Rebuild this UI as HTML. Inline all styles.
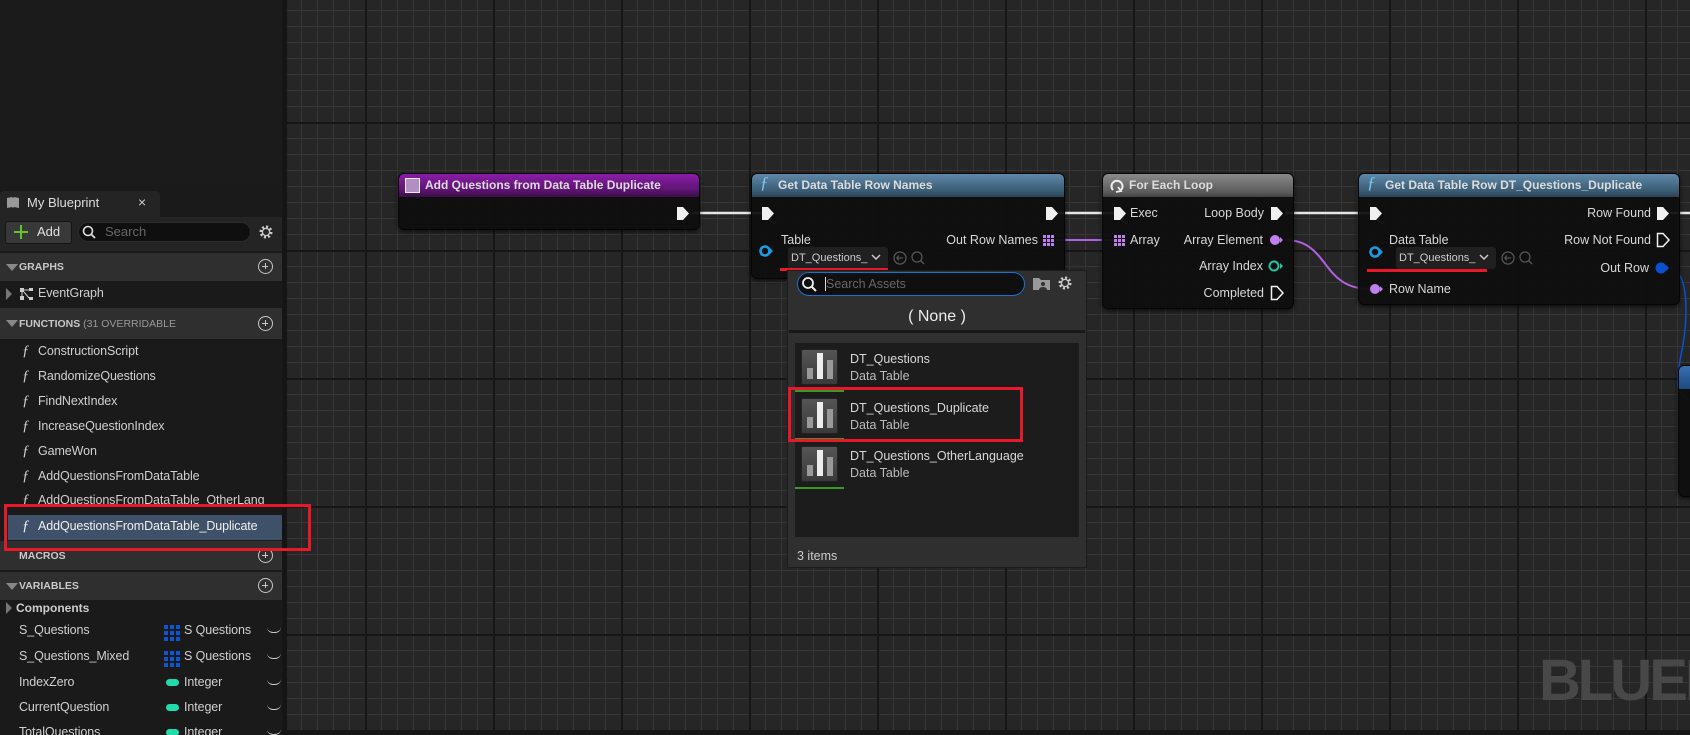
<!DOCTYPE html>
<html><head><meta charset="utf-8"><style>
*{margin:0;padding:0;box-sizing:border-box}
html,body{width:1690px;height:735px;overflow:hidden}
body{background:#262626;font-family:"Liberation Sans",sans-serif;color:#d8d8d8;position:relative;font-size:12.5px}
#root{position:absolute;left:0;top:0;width:1690px;height:735px;overflow:hidden}
.a{position:absolute}
.t{position:absolute;white-space:nowrap;line-height:16px;height:16px}
.r{position:absolute;white-space:nowrap;line-height:16px;height:16px;text-align:right;width:200px}
#canvas{position:absolute;left:287px;top:0;width:1403px;height:730px;background-color:#262626;
background-image:
linear-gradient(to right,#161616 0,#161616 2px,transparent 2px),
linear-gradient(to bottom,#161616 0,#161616 2px,transparent 2px),
linear-gradient(to right,#353535 0,#353535 1px,transparent 1px),
linear-gradient(to bottom,#353535 0,#353535 1px,transparent 1px);
background-size:128px 128px,128px 128px,16px 16px,16px 16px;
background-position:78px 0,0 122px,14px 0,0 10px}
.node{position:absolute;background:rgba(14,14,14,0.94);border:1px solid #050505;border-radius:6px;box-shadow:0 2px 4px rgba(0,0,0,.6)}
.hdr{position:absolute;left:0;right:0;top:0;height:23px;border-radius:5px 5px 0 0;font-weight:bold;color:#dcdcdc;font-size:12px;line-height:23px;padding-left:26px;white-space:nowrap}
.sec{position:absolute;left:0;width:282px;background:#2f2f2f;height:28px}
.sec b{position:absolute;left:19px;top:8px;font-size:10.5px;color:#c8c8c8}
.plus{position:absolute;left:258px;top:6px;width:15px;height:15px;border:1.5px solid #c8c8c8;border-radius:50%;}
.plus:before{content:"";position:absolute;left:3px;top:5.5px;width:6px;height:1.5px;background:#c8c8c8}
.plus:after{content:"";position:absolute;left:5.5px;top:3px;width:1.5px;height:6px;background:#c8c8c8}
.tri{position:absolute;width:0;height:0;border-left:6px solid transparent;border-right:6px solid transparent;border-top:7px solid #888}
.fn{position:absolute;left:22px;font-style:italic;font-family:"Liberation Serif",serif;font-size:15px;color:#ccc}
.it{position:absolute;left:38px;font-size:12.5px;color:#d0d0d0;white-space:nowrap;letter-spacing:-0.1px}
.eye{position:absolute;left:267px;width:14px;height:6px;border-bottom:1.5px solid #ccc;border-radius:0 0 8px 8px}
.dticon{position:absolute;width:37px;height:36px;background:linear-gradient(#555,#3a3a3a);border:1px solid #222;border-radius:2px}
.dticon i{position:absolute;bottom:5px;width:6px;background:#999}
</style></head><body><div id="root">

<div id="canvas"></div>

<!-- left panel -->
<div class="a" style="left:0;top:0;width:282px;height:185px;background:#1b1b1b"></div>
<div class="a" style="left:282px;top:0;width:5px;height:735px;background:#151515"></div>
<div class="a" style="left:0;top:185px;width:282px;height:550px;background:#1a1a1a"></div>
<div class="a" style="left:0;top:191px;width:160px;height:27px;background:#242424;border-radius:4px 4px 0 0"></div>
<svg class="a" style="left:6px;top:196px" width="14" height="13"><path d="M1 2 L6 1 L7 2 L8 1 L13 2 L13 12 L8 11 L7 12 L6 11 L1 12Z" fill="#999"/></svg>
<div class="t" style="left:27px;top:195px;color:#ddd;font-size:13px">My Blueprint</div>
<div class="t" style="left:138px;top:194px;color:#ccc;font-size:14px">×</div>
<div class="a" style="left:0;top:217px;width:282px;height:34px;background:#242424"></div>
<div class="a" style="left:5px;top:221px;width:67px;height:23px;background:#383838;border:1px solid #141414;border-radius:3px"></div>
<div class="a" style="left:20px;top:225px;width:2px;height:14px;background:#6bc02e"></div>
<div class="a" style="left:14px;top:231px;width:14px;height:2px;background:#6bc02e"></div>
<div class="t" style="left:37px;top:224px;color:#e0e0e0;font-size:13px">Add</div>
<div class="a" style="left:78px;top:222px;width:173px;height:20px;background:#0f0f0f;border:1px solid #2c2c2c;border-radius:10px"></div>
<svg class="a" style="left:82px;top:225px" width="15" height="15"><circle cx="6" cy="6" r="4.5" stroke="#ddd" stroke-width="1.6" fill="none"/><path d="M9.5 9.5 L13 13" stroke="#ddd" stroke-width="1.8"/></svg>
<div class="t" style="left:105px;top:224px;color:#666;font-size:13px">Search</div>
<svg class="a" style="left:258px;top:224px" width="16" height="16"><circle cx="8" cy="8" r="5" stroke="#ccc" stroke-width="3" fill="none" stroke-dasharray="2 1.9"/><circle cx="8" cy="8" r="3.6" stroke="#ccc" stroke-width="1.3" fill="none"/></svg>

<div class="sec" style="top:253px"><div class="tri" style="left:6px;top:11px"></div><b>GRAPHS</b><div class="plus"></div></div>
<div class="a" style="left:6px;top:288px;width:0;height:0;border-top:6px solid transparent;border-bottom:6px solid transparent;border-left:6px solid #777"></div>
<svg class="a" style="left:19px;top:287px" width="15" height="14"><rect x="1" y="1" width="4" height="4" fill="#ccc"/><rect x="10" y="1" width="4" height="3" fill="#ccc"/><rect x="1" y="9" width="4" height="4" fill="#ccc"/><rect x="10" y="10" width="4" height="3" fill="#ccc"/><path d="M5 3H10M3 5V9M5 5L10 11" stroke="#ccc"/></svg>
<div class="it" style="top:286px">EventGraph</div>
<div class="sec" style="top:308px;height:31px"><div class="tri" style="left:6px;top:12px"></div><b style="top:10px">FUNCTIONS <span style="font-weight:normal;color:#999">(31 OVERRIDABLE</span></b><div class="plus" style="top:8px"></div></div>
<div class="fn" style="top:343px">ƒ</div><div class="it" style="top:344px">ConstructionScript</div>
<div class="fn" style="top:368px">ƒ</div><div class="it" style="top:369px">RandomizeQuestions</div>
<div class="fn" style="top:393px">ƒ</div><div class="it" style="top:394px">FindNextIndex</div>
<div class="fn" style="top:418px">ƒ</div><div class="it" style="top:419px">IncreaseQuestionIndex</div>
<div class="fn" style="top:443px">ƒ</div><div class="it" style="top:444px">GameWon</div>
<div class="fn" style="top:468px">ƒ</div><div class="it" style="top:469px">AddQuestionsFromDataTable</div>
<div class="fn" style="top:492px">ƒ</div><div class="it" style="top:493px">AddQuestionsFromDataTable_OtherLang</div>
<div class="a" style="left:8px;top:515px;width:274px;height:25px;background:#3e5169"></div>
<div class="fn" style="top:518px;color:#eee">ƒ</div><div class="it" style="top:519px;color:#f0f0f0">AddQuestionsFromDataTable_Duplicate</div>
<div class="sec" style="top:541px;height:29px"><b style="top:9px">MACROS</b><div class="plus" style="top:7px"></div></div>
<div class="sec" style="top:572px;height:28px"><div class="tri" style="left:6px;top:11px"></div><b>VARIABLES</b><div class="plus"></div></div>
<div class="a" style="left:6px;top:602px;width:0;height:0;border-top:6px solid transparent;border-bottom:6px solid transparent;border-left:6px solid #777"></div>
<div class="t" style="left:16px;top:600px;font-weight:bold;font-size:12px;color:#ccc">Components</div>
<div class="it" style="left:19px;top:623px">S_Questions</div>
<div class="it" style="left:19px;top:649px">S_Questions_Mixed</div>
<div class="it" style="left:19px;top:675px">IndexZero</div>
<div class="it" style="left:19px;top:700px">CurrentQuestion</div>
<div class="it" style="left:19px;top:725px">TotalQuestions</div>
<svg class="a" style="left:164px;top:625px" width="16" height="16"><g fill="#0a56d6"><rect x="0" y="0" width="4" height="4"/><rect x="6" y="0" width="4" height="4"/><rect x="12" y="0" width="4" height="4"/><rect x="0" y="6" width="4" height="4"/><rect x="6" y="6" width="4" height="4"/><rect x="12" y="6" width="4" height="4"/><rect x="0" y="12" width="4" height="4"/><rect x="6" y="12" width="4" height="4"/><rect x="12" y="12" width="4" height="4"/></g></svg>
<svg class="a" style="left:164px;top:651px" width="16" height="16"><g fill="#0a56d6"><rect x="0" y="0" width="4" height="4"/><rect x="6" y="0" width="4" height="4"/><rect x="12" y="0" width="4" height="4"/><rect x="0" y="6" width="4" height="4"/><rect x="6" y="6" width="4" height="4"/><rect x="12" y="6" width="4" height="4"/><rect x="0" y="12" width="4" height="4"/><rect x="6" y="12" width="4" height="4"/><rect x="12" y="12" width="4" height="4"/></g></svg>
<div class="it" style="left:184px;top:623px">S Questions</div>
<div class="it" style="left:184px;top:649px">S Questions</div>
<div class="a" style="left:166px;top:679px;width:13px;height:7px;border-radius:4px;background:#1fdcaa"></div>
<div class="a" style="left:166px;top:704px;width:13px;height:7px;border-radius:4px;background:#1fdcaa"></div>
<div class="a" style="left:166px;top:729px;width:13px;height:7px;border-radius:4px;background:#1fdcaa"></div>
<div class="it" style="left:184px;top:675px">Integer</div>
<div class="it" style="left:184px;top:700px">Integer</div>
<div class="it" style="left:184px;top:725px">Integer</div>
<div class="eye" style="top:627px"></div><div class="eye" style="top:653px"></div><div class="eye" style="top:679px"></div><div class="eye" style="top:704px"></div><div class="eye" style="top:729px"></div>
<div class="a" style="left:4px;top:504px;width:307px;height:47px;border:3px solid #e8182a"></div>

<!-- wires -->
<svg class="a" style="left:0;top:0" width="1690" height="735">
<g stroke="#e6e6e6" stroke-width="2.5" fill="none">
<path d="M692 213H762"/><path d="M1058 213H1117"/><path d="M1285 213H1370"/><path d="M1670 213H1690"/>
</g>
<g stroke="#b060e0" stroke-width="2" fill="none">
<path d="M1056 240H1112"/>
<path d="M1285 240 C1330 240,1320 289,1370 289"/>
</g>
<path d="M1668 268 C1690 268,1688 320,1682 350 C1676 380,1675 395,1690 400" stroke="#0a50d0" stroke-width="1.5" fill="none"/>
</svg>

<!-- node 1 -->
<div class="node" style="left:398px;top:173px;width:302px;height:57px">
 <div class="hdr" style="background:linear-gradient(to bottom,#8a1da8,#5c1470 70%,#3a1046)">Add Questions from Data Table Duplicate</div>
 <div class="a" style="left:6px;top:4px;width:15px;height:15px;background:#b090c0;border:1.5px solid #eee"></div>
</div>

<!-- node 2 -->
<div class="node" style="left:751px;top:173px;width:314px;height:106px">
 <div class="hdr" style="background:linear-gradient(to bottom,#5f88a8,#36576f 80%,#2a4154)">Get Data Table Row Names</div>
 <div class="a" style="left:8px;top:-1px;font-family:'Liberation Serif',serif;font-style:italic;font-size:17px;color:#7ec8f0">ƒ</div>
</div>

<!-- node 3 -->
<div class="node" style="left:1102px;top:173px;width:192px;height:136px">
 <div class="hdr" style="background:linear-gradient(to bottom,#8a8a8a,#5a5a5a 80%,#444)">For Each Loop</div>
 <svg class="a" style="left:6px;top:4px" width="16" height="15"><path d="M4 12 A5.5 5.5 0 1 1 12 12" stroke="#eee" stroke-width="2" fill="none"/><path d="M9 9 L12 13 L7 14" stroke="#eee" stroke-width="1.8" fill="none"/></svg>
</div>

<!-- node 4 -->
<div class="node" style="left:1358px;top:173px;width:322px;height:132px">
 <div class="hdr" style="background:linear-gradient(to bottom,#5f88a8,#36576f 80%,#2a4154)">Get Data Table Row DT_Questions_Duplicate</div>
 <div class="a" style="left:8px;top:-1px;font-family:'Liberation Serif',serif;font-style:italic;font-size:17px;color:#7ec8f0">ƒ</div>
</div>

<!-- partial node right -->
<div class="node" style="left:1678px;top:365px;width:40px;height:132px">
 <div class="hdr" style="background:linear-gradient(#3a6fb0,#1d4a80)"></div>
</div>

<!-- pins -->
<svg class="a" style="left:0;top:0" width="1690" height="735">
<defs><path id="ex" d="M0 0H6L12 6.5L6 13H0Z"/></defs>
<g fill="#f0f0f0">
<use href="#ex" x="677" y="207"/><use href="#ex" x="762" y="207"/><use href="#ex" x="1046" y="207"/>
<use href="#ex" x="1114" y="207"/><use href="#ex" x="1271" y="207"/>
<use href="#ex" x="1370" y="207"/><use href="#ex" x="1657" y="207"/>
</g>
<g fill="none" stroke="#f0f0f0" stroke-width="1.5">
<path d="M1271.5 286.5H1277L1283 293L1277 299.5H1271.5Z"/>
<path d="M1657.5 233.5H1663L1669 240L1663 246.5H1657.5Z"/>
</g>
<g fill="none" stroke="#1a9de6" stroke-width="2.5"><circle cx="765" cy="251" r="4.5"/><circle cx="1375" cy="252" r="4.5"/></g>
<path d="M770 248L773 251L770 254Z" fill="#1a9de6"/><path d="M1380 249L1383 252L1380 255Z" fill="#1a9de6"/>
<circle cx="1275" cy="240" r="5" fill="#c080f0"/><path d="M1280 237L1283 240L1280 243Z" fill="#c080f0"/>
<circle cx="1375" cy="289" r="5" fill="#c080f0"/><path d="M1380 286L1383 289L1380 292Z" fill="#c080f0"/>
<circle cx="1274" cy="266" r="4.5" fill="none" stroke="#1fc8a0" stroke-width="2"/><path d="M1280 263L1283 266L1280 269Z" fill="#1fc8a0"/>
<circle cx="1661" cy="268" r="5.5" fill="#0a50d0"/><path d="M1666 265L1669 268L1666 271Z" fill="#0a50d0"/>
<g fill="#c080f0">
<rect x="1043" y="235" width="3" height="3"/><rect x="1047" y="235" width="3" height="3"/><rect x="1051" y="235" width="3" height="3"/>
<rect x="1043" y="239" width="3" height="3"/><rect x="1047" y="239" width="3" height="3"/><rect x="1051" y="239" width="3" height="3"/>
<rect x="1043" y="243" width="3" height="3"/><rect x="1047" y="243" width="3" height="3"/><rect x="1051" y="243" width="3" height="3"/>
<rect x="1114" y="235" width="3" height="3"/><rect x="1118" y="235" width="3" height="3"/><rect x="1122" y="235" width="3" height="3"/>
<rect x="1114" y="239" width="3" height="3"/><rect x="1118" y="239" width="3" height="3"/><rect x="1122" y="239" width="3" height="3"/>
<rect x="1114" y="243" width="3" height="3"/><rect x="1118" y="243" width="3" height="3"/><rect x="1122" y="243" width="3" height="3"/>
</g>
</svg>

<!-- node 2 content -->
<div class="t" style="left:781px;top:232px">Table</div>
<div class="r" style="left:838px;top:232px">Out Row Names</div>
<div class="a" style="left:788px;top:247px;width:100px;height:22px;background:#202020;border-radius:3px"></div>
<div class="t" style="left:791px;top:250px;font-size:11px;color:#ccc">DT_Questions_</div>
<svg class="a" style="left:871px;top:254px" width="10" height="7"><path d="M1 1L5 5L9 1" stroke="#ccc" stroke-width="1.5" fill="none"/></svg>
<svg class="a" style="left:893px;top:250px" width="36" height="16"><circle cx="7" cy="8" r="6" stroke="#555" stroke-width="1.3" fill="none"/><path d="M10 8H4M6 5.5L3.8 8L6 10.5" stroke="#555" stroke-width="1.3" fill="none"/><circle cx="24" cy="7" r="5" stroke="#555" stroke-width="1.3" fill="none"/><path d="M27.5 10.5L31 14" stroke="#555" stroke-width="1.5"/></svg>
<div class="a" style="left:780px;top:268px;width:108px;height:3px;background:#e8182a"></div>

<!-- node 3 content -->
<div class="t" style="left:1130px;top:205px">Exec</div>
<div class="t" style="left:1130px;top:232px">Array</div>
<div class="r" style="left:1064px;top:205px">Loop Body</div>
<div class="r" style="left:1063px;top:232px">Array Element</div>
<div class="r" style="left:1063px;top:258px">Array Index</div>
<div class="r" style="left:1064px;top:285px">Completed</div>

<!-- node 4 content -->
<div class="t" style="left:1389px;top:232px">Data Table</div>
<div class="t" style="left:1389px;top:281px">Row Name</div>
<div class="r" style="left:1451px;top:205px">Row Found</div>
<div class="r" style="left:1451px;top:232px">Row Not Found</div>
<div class="r" style="left:1449px;top:260px">Out Row</div>
<div class="a" style="left:1396px;top:247px;width:100px;height:22px;background:#202020;border-radius:3px"></div>
<div class="t" style="left:1399px;top:250px;font-size:11px;color:#ccc">DT_Questions_</div>
<svg class="a" style="left:1479px;top:254px" width="10" height="7"><path d="M1 1L5 5L9 1" stroke="#ccc" stroke-width="1.5" fill="none"/></svg>
<svg class="a" style="left:1501px;top:250px" width="36" height="16"><circle cx="7" cy="8" r="6" stroke="#555" stroke-width="1.3" fill="none"/><path d="M10 8H4M6 5.5L3.8 8L6 10.5" stroke="#555" stroke-width="1.3" fill="none"/><circle cx="24" cy="7" r="5" stroke="#555" stroke-width="1.3" fill="none"/><path d="M27.5 10.5L31 14" stroke="#555" stroke-width="1.5"/></svg>
<div class="a" style="left:1367px;top:269px;width:120px;height:3px;background:#e8182a"></div>

<!-- popup -->
<div class="a" style="left:787px;top:270px;width:300px;height:298px;background:#2f2f2f;border:1px solid #1c1c1c"></div>
<div class="a" style="left:797px;top:272px;width:228px;height:24px;background:#0f0f0f;border:1.5px solid #1a6fd0;border-radius:12px"></div>
<svg class="a" style="left:801px;top:276px" width="17" height="17"><circle cx="7" cy="7" r="5" stroke="#eee" stroke-width="1.8" fill="none"/><path d="M10.5 10.5L15 15" stroke="#eee" stroke-width="2"/></svg>
<div class="a" style="left:825px;top:277px;width:1px;height:14px;background:#ddd"></div>
<div class="t" style="left:826px;top:276px;color:#666">Search Assets</div>
<svg class="a" style="left:1033px;top:277px" width="18" height="14"><path d="M0 1H6L8 3H17V13H0Z" fill="#999"/><circle cx="10" cy="7" r="2" fill="#333"/><path d="M6 13C6 9,14 9,14 13" fill="#333"/></svg>
<svg class="a" style="left:1057px;top:275px" width="16" height="16"><circle cx="8" cy="8" r="5" stroke="#ccc" stroke-width="3" fill="none" stroke-dasharray="2 1.9"/><circle cx="8" cy="8" r="3.6" stroke="#ccc" stroke-width="1.3" fill="none"/></svg>
<div class="t" style="left:787px;top:308px;width:300px;text-align:center;font-size:16px;line-height:18px;height:18px;color:#eee">( None )</div>
<div class="a" style="left:789px;top:330px;width:296px;height:3px;background:#181818"></div>
<div class="a" style="left:795px;top:343px;width:284px;height:194px;background:#1c1c1c"></div>

<div class="dticon" style="left:801px;top:349px"><i style="left:5px;height:11px"></i><i style="left:15px;height:26px;background:#eee"></i><i style="left:25px;height:19px"></i></div>
<div class="a" style="left:795px;top:390px;width:49px;height:2px;background:#3a9a28"></div>
<div class="t" style="left:850px;top:351px">DT_Questions</div><div class="t" style="left:850px;top:368px;color:#bbb">Data Table</div>

<div class="dticon" style="left:801px;top:398px"><i style="left:5px;height:11px"></i><i style="left:15px;height:26px;background:#eee"></i><i style="left:25px;height:19px"></i></div>
<div class="a" style="left:795px;top:438px;width:49px;height:2px;background:#3a9a28"></div>
<div class="t" style="left:850px;top:400px">DT_Questions_Duplicate</div><div class="t" style="left:850px;top:417px;color:#bbb">Data Table</div>

<div class="dticon" style="left:801px;top:446px"><i style="left:5px;height:11px"></i><i style="left:15px;height:26px;background:#eee"></i><i style="left:25px;height:19px"></i></div>
<div class="a" style="left:795px;top:487px;width:49px;height:2px;background:#3a9a28"></div>
<div class="t" style="left:850px;top:448px">DT_Questions_OtherLanguage</div><div class="t" style="left:850px;top:465px;color:#bbb">Data Table</div>

<div class="a" style="left:788px;top:387px;width:235px;height:55px;border:3px solid #e8182a"></div>
<div class="t" style="left:797px;top:548px;color:#ccc">3 items</div>

<!-- watermark -->
<div class="t" style="left:1539px;top:648px;height:66px;line-height:66px;font-size:58px;font-weight:bold;color:#484848;letter-spacing:-3px;width:151px;overflow:hidden">BLUEPRINT</div>
<div class="a" style="left:287px;top:730px;width:1403px;height:5px;background:#161616"></div>
</div></body></html>
